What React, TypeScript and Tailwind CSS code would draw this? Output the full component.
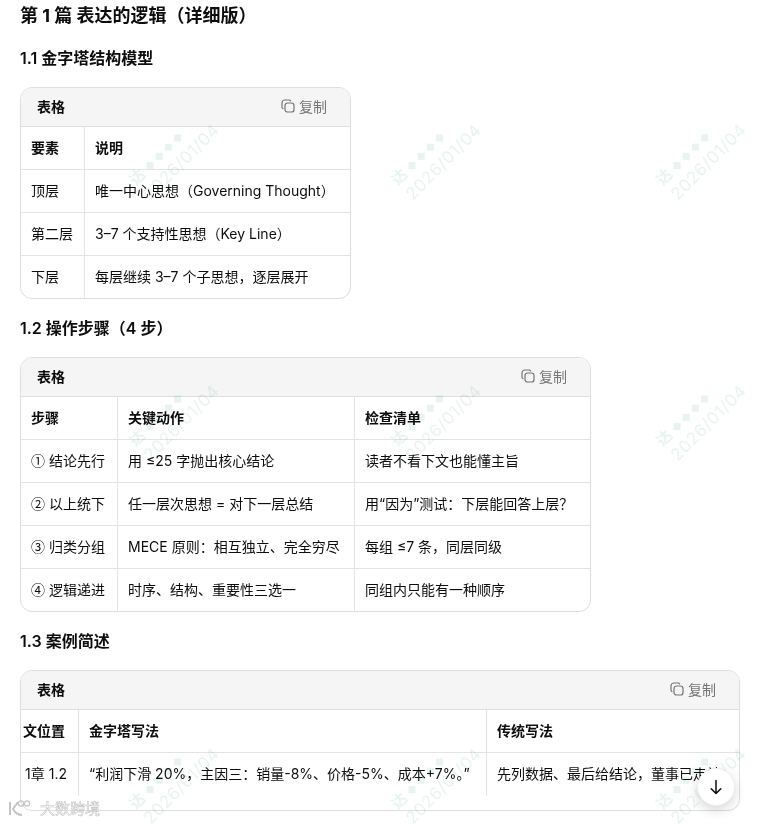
import React from 'react';

const fontStack = "font-['Inter','Noto_Sans_CJK_SC',sans-serif]";
const numClass = "font-['Noto_Sans_CJK_SC',sans-serif]";

function CopyIcon() {
  return (
    <svg width="14" height="14" viewBox="0 0 14 14" fill="none" stroke="#757575" strokeWidth="1.2">
      <rect x="4" y="4" width="9" height="9" rx="2.6" />
      <path d="M9.6 1.9 A 2 2 0 0 0 8 1 H4 A 3 3 0 0 0 1 4 V8 A 2 2 0 0 0 1.9 9.6" strokeLinecap="round" />
    </svg>
  );
}

function TableCard({ widthClass, children }: { widthClass: string; children: React.ReactNode }) {
  return (
    <div className={`${widthClass} rounded-xl border border-[#dedede] overflow-hidden bg-white`}>
      <div className="h-[39px] bg-[#f5f5f5] border-b border-[#dedede] flex items-center justify-between pl-4 pr-[23px] pb-[2px]">
        <span className="text-[14px] font-semibold text-[#0d0d0d]">表格</span>
        <span className="flex items-center gap-1 text-[14px] text-[#757575]">
          <CopyIcon />
          复制
        </span>
      </div>
      {children}
    </div>
  );
}

function Row({ cols, cells, head, last }: { cols: string; cells: React.ReactNode[]; head?: boolean; last?: boolean }) {
  return (
    <div className={`grid ${cols} ${last ? 'h-[42px]' : 'h-[43px] border-b border-[#e3e3e3]'}`}>
      {cells.map((c, i) => (
        <div
          key={i}
          className={`flex items-center whitespace-pre overflow-hidden pl-[10px] pr-[10px] pb-[2px] text-[14px] text-[#0d0d0d] ${head ? 'font-semibold' : ''} ${i > 0 ? 'border-l border-[#e3e3e3]' : ''}`}
        >
          {c}
        </div>
      ))}
    </div>
  );
}

function Step({ num, label }: { num: string; label: string }) {
  return (
    <span>
      <span className={numClass}>{num}</span> {label}
    </span>
  );
}

function Watermark({ className }: { className: string }) {
  return (
    <div className={`absolute w-[112px] -rotate-45 leading-[20px] text-[#e9f4f1] mix-blend-multiply pointer-events-none select-none ${className}`}>
      <div className="flex items-center gap-[6px] text-[15px] font-bold">
        <span>达</span>
        <span className="w-[7px] h-[7px] rotate-45 bg-[#e9f4f1]" />
        <span className="w-[7px] h-[7px] rotate-45 bg-[#e9f4f1]" />
        <span className="w-[7px] h-[7px] rotate-45 bg-[#e9f4f1]" />
        <span className="w-[7px] h-[7px] rotate-45 bg-[#e9f4f1]" />
      </div>
      <div className="text-[17px] tracking-[0.5px]">2026/01/04</div>
    </div>
  );
}

export default function App() {
  return (
    <div className={`relative w-[770px] h-[824px] overflow-hidden bg-white pl-5 ${fontStack}`}>
      <div>
        <h2 className="pt-[4px] text-[18px] leading-[24px] font-bold text-[#0d0d0d]">第 1 篇 表达的逻辑（详细版）</h2>
        <h3 className="mt-[18px] text-[16px] leading-[24px] font-semibold text-[#0d0d0d]">1.1 金字塔结构模型</h3>

        <div className="mt-[17px]">
          <TableCard widthClass="w-[331px]">
            <Row cols="grid-cols-[63px_1fr]" cells={['要素', '说明']} head />
            <Row cols="grid-cols-[63px_1fr]" cells={['顶层', '唯一中心思想（Governing Thought）']} />
            <Row cols="grid-cols-[63px_1fr]" cells={['第二层', '3–7 个支持性思想（Key Line）']} />
            <Row cols="grid-cols-[63px_1fr]" cells={['下层', '每层继续 3–7 个子思想，逐层展开']} last />
          </TableCard>
        </div>

        <h3 className="mt-[17px] text-[16px] leading-[24px] font-semibold text-[#0d0d0d]">1.2 操作步骤（4 步）</h3>

        <div className="mt-[17px]">
          <TableCard widthClass="w-[571px]">
            <Row cols="grid-cols-[96px_237px_1fr]" cells={['步骤', '关键动作', '检查清单']} head />
            <Row cols="grid-cols-[96px_237px_1fr]" cells={[<Step num="①" label="结论先行" />, '用 ≤25 字抛出核心结论', '读者不看下文也能懂主旨']} />
            <Row cols="grid-cols-[96px_237px_1fr]" cells={[<Step num="②" label="以上统下" />, '任一层次思想 = 对下一层总结', '用“因为”测试：下层能回答上层？']} />
            <Row cols="grid-cols-[96px_237px_1fr]" cells={[<Step num="③" label="归类分组" />, 'MECE 原则：相互独立、完全穷尽', '每组 ≤7 条，同层同级']} />
            <Row cols="grid-cols-[96px_237px_1fr]" cells={[<Step num="④" label="逻辑递进" />, '时序、结构、重要性三选一', '同组内只能有一种顺序']} last />
          </TableCard>
        </div>

        <h3 className="mt-[17px] text-[16px] leading-[24px] font-semibold text-[#0d0d0d]">1.3 案例简述</h3>

        <div className="mt-[17px]">
          <TableCard widthClass="w-[720px] pb-[14px]">
            <div className="grid grid-cols-[57px_408px_1fr] h-[43px] border-b border-[#e3e3e3] text-[14px] font-semibold text-[#0d0d0d]">
              <div className="flex items-center justify-end overflow-hidden pr-[13px] pb-[2px] whitespace-nowrap">文位置</div>
              <div className="flex items-center border-l border-[#e3e3e3] pl-[10px] pb-[2px]">金字塔写法</div>
              <div className="flex items-center border-l border-[#e3e3e3] pl-[10px] pb-[2px]">传统写法</div>
            </div>
            <div className="grid grid-cols-[57px_408px_1fr] h-[43px] text-[14px] text-[#0d0d0d]">
              <div className="flex items-center justify-end overflow-hidden pr-[11px] pb-[2px] whitespace-nowrap">1章 1.2</div>
              <div className="flex items-center border-l border-[#e3e3e3] pl-[10px] pb-[2px] whitespace-nowrap">“利润下滑 20%，主因三：销量-8%、价格-5%、成本+7%。”</div>
              <div className="flex items-center border-l border-[#e3e3e3] pl-[10px] pb-[2px] whitespace-nowrap overflow-hidden">先列数据、最后给结论，董事已走神</div>
            </div>
          </TableCard>
        </div>
      </div>

      <Watermark className="left-[123px] top-[130px]" />
      <Watermark className="left-[385px] top-[130px]" />
      <Watermark className="left-[650px] top-[130px]" />
      <Watermark className="left-[123px] top-[391px]" />
      <Watermark className="left-[385px] top-[391px]" />
      <Watermark className="left-[650px] top-[391px]" />
      <Watermark className="left-[123px] top-[754px]" />
      <Watermark className="left-[385px] top-[754px]" />
      <Watermark className="left-[650px] top-[754px]" />

      <button className="absolute left-[697px] top-[768px] w-[38px] h-[38px] rounded-full bg-white border border-[#efefef] shadow-[0_4px_12px_rgba(0,0,0,0.16)] flex items-center justify-center">
        <svg width="18" height="18" viewBox="0 0 18 18" fill="none" stroke="#0d0d0d" strokeWidth="1.5" strokeLinecap="round" strokeLinejoin="round">
          <path d="M9 2.5V15.5M4.2 10.7 9 15.5l4.8-4.8" />
        </svg>
      </button>

      <div className="absolute left-[8px] top-[799px] flex items-center gap-[6px] blur-[0.4px]">
        <svg width="26" height="20" viewBox="0 0 26 20" fill="none" stroke="#c4c4c4" strokeWidth="2">
          <path d="M2 3V16M10 3 5 10c2 4 5 6 9 6" />
          <circle cx="13" cy="4.5" r="2.6" strokeWidth="1.2" />
          <circle cx="19" cy="4.5" r="2.6" strokeWidth="1.2" />
        </svg>
        <span className="text-[15px] leading-[20px] text-white [-webkit-text-stroke:0.5px_#bdbdbd]">大数跨境</span>
      </div>
    </div>
  );
}
